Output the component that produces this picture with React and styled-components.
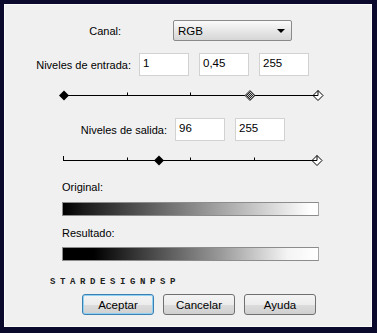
import React from "react";
import styled, { createGlobalStyle } from "styled-components";

const Global = createGlobalStyle`
    html, body {
        margin: 0;
        padding: 0;
        background: #0b0a2c;
    }
    body {
        width: 377px;
        height: 333px;
        overflow: hidden;
        font-family: "Liberation Sans", Arial, sans-serif;
        font-size: 11px;
        color: #000;
    }
`

const Panel = styled.div`
    box-sizing: border-box;
    margin: 4px;
    width: 368px;
    height: 323px;
    background: #f0f0f0;
    border: 1px solid #fbfbfb;
    display: flex;
    flex-direction: column;
    padding-top: 15px;
`

const Row = styled.div`
    display: flex;
    align-items: center;
    margin-top: ${props => props.top || 0}px;
    gap: ${props => props.gap || 0}px;
`

const Label = styled.div`
    width: ${props => props.width}px;
    margin-right: ${props => props.space}px;
    text-align: right;
    white-space: nowrap;
    line-height: 14px;
`

const Field = styled.div`
    box-sizing: border-box;
    width: 50px;
    height: 23px;
    background: #fff;
    border: 1px solid #d2d2d2;
    padding: 2px 3px;
    line-height: 15px;
    font-size: 11.5px;
`

const Select = styled.div`
    box-sizing: border-box;
    width: 119px;
    height: 21px;
    border: 1px solid #8a8a8a;
    border-radius: 2px;
    background: linear-gradient(#fbfbfb, #e6e6e6 55%, #d6d6d6);
    display: flex;
    align-items: center;
    justify-content: space-between;
    padding: 0 6px 0 4px;
    font-size: 11.5px;
`

const Arrow = styled.span`
    width: 0;
    height: 0;
    border-left: 4px solid transparent;
    border-right: 4px solid transparent;
    border-top: 4px solid #000;
`

const Slider = styled.svg`
    display: block;
    margin-top: ${props => props.top}px;
    margin-left: 51px;
`

const Caption = styled.div`
    margin-top: ${props => props.top}px;
    margin-left: 57px;
    line-height: 14px;
`

const Bar = styled.div`
    box-sizing: border-box;
    margin-top: ${props => props.top}px;
    margin-left: 57px;
    width: 257px;
    height: 14px;
    border: 1px solid #8c8c8c;
    border-right-color: #a8a8a8;
    background: ${props => props.gradient};
`

const Watermark = styled.div`
    margin-top: 16px;
    margin-left: 45px;
    font-family: "Liberation Mono", monospace;
    font-size: 9px;
    font-weight: bold;
    line-height: 10px;
    letter-spacing: 4.6px;
    color: #222;
`

const Buttons = styled.div`
    display: flex;
    gap: 9px;
    margin-top: 7px;
    padding-left: 77px;
`

const Button = styled.button`
    box-sizing: border-box;
    width: 72px;
    height: 21px;
    font-family: inherit;
    font-size: 11.5px;
    color: #000;
    border: 1px solid ${props => props.main ? "#3c7fb1" : "#707070"};
    box-shadow: ${props => props.main ? "inset 0 0 0 1px #8fd0f3" : "none"};
    border-radius: 3px;
    background: linear-gradient(#f4f4f4, #ececec 50%, #dcdcdc 51%, #d0d0d0);
    padding: 0;
`

function Diamond({ x, kind }) {
    const d = `M${x} 1.5 L${x + 5} 6.5 L${x} 11.5 L${x - 5} 6.5 Z`;
    if (kind === "solid") return <path d={d} fill="#000" />;
    if (kind === "hatch") return <path d={d} fill="url(#hatch)" stroke="#333" strokeWidth="1" />;
    return (
        <g>
            <path d={d} fill="#fff" stroke="#000" strokeWidth="1" />
            <path d={`M${x - 5} 6.5 L${x} 6.5 L${x} 1.5`} fill="none" stroke="#000" strokeWidth="1" />
        </g>
    );
}

function Track({ top, ticks, marks, startTick }) {
    return (
        <Slider top={top} width="270" height="13" viewBox="0 0 270 13">
            <defs>
                <pattern id="hatch" width="2" height="2" patternUnits="userSpaceOnUse">
                    <rect width="2" height="2" fill="#c8c8c8" />
                    <rect width="1" height="1" fill="#222" />
                    <rect x="1" y="1" width="1" height="1" fill="#222" />
                </pattern>
            </defs>
            <line x1="7" y1="6.5" x2="262" y2="6.5" stroke="#000" strokeWidth="1" />
            {startTick && <line x1="7.5" y1="2" x2="7.5" y2="7" stroke="#000" />}
            {ticks.map((t) => (
                <line key={t} x1={t + 0.5} y1="3.5" x2={t + 0.5} y2="7" stroke="#000" />
            ))}
            {marks.map((m, i) => <Diamond key={i} x={m.x} kind={m.kind} />)}
        </Slider>
    );
}

export default function App() {
    return (
        <>
            <Global />
            <Panel>
                <Row>
                    <Label width={116} space={52}>Canal:</Label>
                    <Select>
                        <span>RGB</span>
                        <Arrow />
                    </Select>
                </Row>
                <Row top={12} gap={10}>
                    <Label width={126} space={-2}>Niveles de entrada:</Label>
                    <Field>1</Field>
                    <Field>0,45</Field>
                    <Field>255</Field>
                </Row>
                <Track
                    top={13}
                    ticks={[71, 134]}
                    marks={[
                        { x: 8, kind: "solid" },
                        { x: 194, kind: "hatch" },
                        { x: 262, kind: "outline" },
                    ]}
                />
                <Row top={16} gap={10}>
                    <Label width={162} space={-2}>Niveles de salida:</Label>
                    <Field>96</Field>
                    <Field>255</Field>
                </Row>
                <Track
                    top={13}
                    startTick
                    ticks={[71, 134, 198]}
                    marks={[
                        { x: 103, kind: "solid" },
                        { x: 261, kind: "outline" },
                    ]}
                />
                <Caption top={13}>Original:</Caption>
                <Bar top={8} gradient="linear-gradient(to right, #000 0%, #1a1a1a 8%, #fff 97%)" />
                <Caption top={10}>Resultado:</Caption>
                <Bar top={7} gradient="linear-gradient(to right, #000 0%, #000 12%, #3a3a3a 30%, #9a9a9a 62%, #f4f4f4 88%, #fff 100%)" />
                <Watermark>STARDESIGNPSP</Watermark>
                <Buttons>
                    <Button main>Aceptar</Button>
                    <Button>Cancelar</Button>
                    <Button>Ayuda</Button>
                </Buttons>
            </Panel>
        </>
    );
}
